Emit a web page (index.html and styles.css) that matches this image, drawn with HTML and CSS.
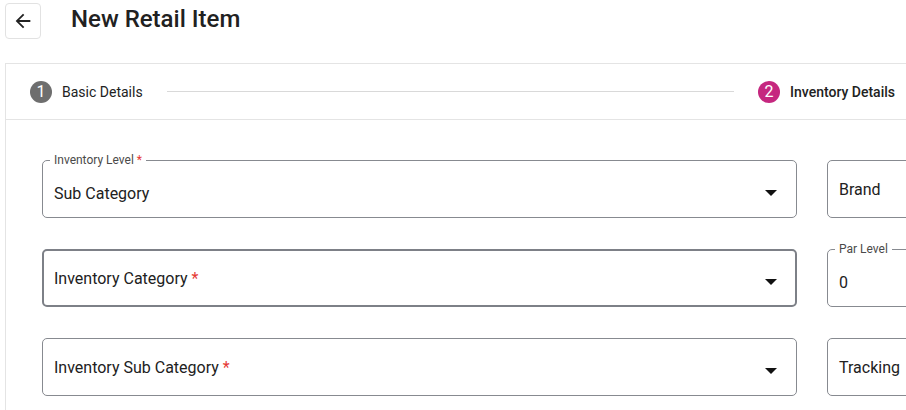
FILE: index.html
```html
<!DOCTYPE html>
<html>
<head>
<meta charset="utf-8">
<link rel="stylesheet" href="styles.css">
</head>
<body>
<header class="header">
  <button class="back" aria-label="Back">
    <svg width="22" height="22" viewBox="0 0 24 24"><path d="M20 11H7.83l5.59-5.59L12 4l-8 8 8 8 1.41-1.41L7.83 13H20v-2z" fill="#222"/></svg>
  </button>
  <h1 class="title">New Retail Item</h1>
</header>
<section class="card">
  <div class="stepper">
    <span class="step-num done">1</span>
    <span class="step-label">Basic Details</span>
    <span class="step-line"></span>
    <span class="step-num active">2</span>
    <span class="step-label strong">Inventory Details</span>
  </div>
  <div class="form">
    <div class="field labeled">
      <span class="float-label">Inventory Level <span class="req">*</span></span>
      <span class="value">Sub Category</span>
      <span class="caret"></span>
    </div>
    <div class="field">
      <span class="value">Brand</span>
    </div>
    <div class="field focus">
      <span class="value">Inventory Category <span class="req">*</span></span>
      <span class="caret"></span>
    </div>
    <div class="field labeled">
      <span class="float-label">Par Level</span>
      <span class="value">0</span>
    </div>
    <div class="field">
      <span class="value">Inventory Sub Category <span class="req">*</span></span>
      <span class="caret"></span>
    </div>
    <div class="field">
      <span class="value">Tracking</span>
    </div>
  </div>
</section>
</body>
</html>
```
FILE: styles.css
```css
html, body {
  margin: 0;
  padding: 0;
  background: #fff;
  overflow: hidden;
  font-family: Roboto, "Liberation Sans", sans-serif;
  color: #212121;
}
.header {
  display: flex;
  align-items: center;
  padding: 3px 0 0 5px;
  height: 36px;
}
.back {
  width: 36px;
  height: 36px;
  box-sizing: border-box;
  border: 1px solid #e2e2e2;
  border-radius: 4px;
  background: #fff;
  display: flex;
  align-items: center;
  justify-content: center;
  padding: 0;
}
.title {
  margin: 0 0 0 30px;
  font-size: 24px;
  font-weight: 500;
  color: #212121;
  position: relative;
  top: -2px;
}
.card {
  margin: 24px 0 0 5px;
  width: 901px;
  height: 347px;
  box-sizing: border-box;
  border: 1px solid #e4e4e4;
  border-right: none;
  border-bottom: none;
  overflow: hidden;
}
.stepper {
  display: flex;
  align-items: center;
  height: 55px;
  padding: 0 11px 0 24px;
  border-bottom: 1px solid #e4e4e4;
}
.step-num {
  width: 22px;
  height: 22px;
  border-radius: 50%;
  color: #fff;
  font-size: 16px;
  display: flex;
  align-items: center;
  justify-content: center;
  flex: none;
}
.step-num.done { background: #6e6e6e; }
.step-num.active { background: #c5277f; }
.step-label {
  margin-left: 10px;
  font-size: 14px;
  color: #222;
  white-space: nowrap;
}
.step-label.strong { font-weight: 500; }
.step-line {
  flex: 1;
  height: 1px;
  background: #d9d9d9;
  margin: 0 24px;
}
.form {
  display: grid;
  grid-template-columns: 755px 755px;
  column-gap: 30px;
  row-gap: 31px;
  padding: 40px 0 0 36px;
}
.field {
  position: relative;
  height: 58px;
  box-sizing: border-box;
  border: 1px solid #878a90;
  border-radius: 5px;
  display: flex;
  align-items: center;
  padding: 0 11px;
}
.field.focus {
  border: 2px solid #7d8087;
  padding: 0 10px;
}
.field.labeled .value {
  padding-top: 8px;
}
.value {
  font-size: 16px;
  color: #212121;
  white-space: nowrap;
}
.req { color: #e53935; }
.float-label {
  position: absolute;
  left: 7px;
  top: -8px;
  padding: 0 4px;
  background: #fff;
  font-size: 12px;
  line-height: 15px;
  color: #4a4a4a;
  white-space: nowrap;
}
.caret {
  position: absolute;
  right: 19px;
  top: 29px;
  width: 0;
  height: 0;
  border-left: 6px solid transparent;
  border-right: 6px solid transparent;
  border-top: 6px solid #111;
}
.field.focus .caret { right: 18px; top: 28px; }
```
